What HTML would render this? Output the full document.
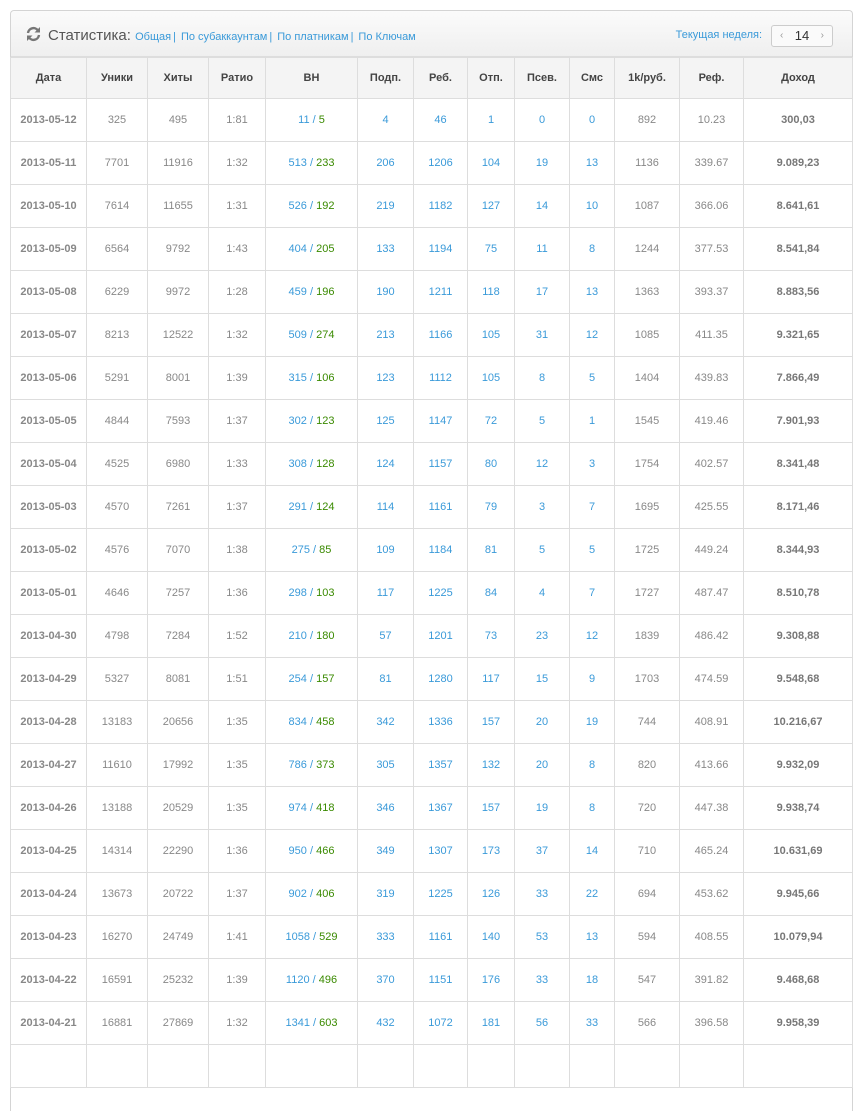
<!DOCTYPE html>
<html><head><meta charset="utf-8"><style>
body{margin:0;background:#fff;font-family:"Liberation Sans",Arial,sans-serif;width:860px;height:1049px;overflow:hidden}
.panel{position:absolute;left:10px;top:10px;width:841px;border:1px solid #d4d4d4;border-radius:4px 4px 0 0;border-bottom:none;height:1100px}
.hd{height:45px;background:linear-gradient(#fbfbfb,#efefef);border-bottom:1px solid #ddd;position:relative;border-radius:4px 4px 0 0}
.title{position:absolute;left:14px;top:15px;font-size:15px;color:#555}
.title a,.wk{color:#3a9ad9;font-size:11px;text-decoration:none}
.sep{color:#3a9ad9;font-size:11px;margin:0 5px 0 2px}
.wk{position:absolute;right:90px;top:18px}
.pg{position:absolute;right:19px;top:14px;width:60px;height:20px;border:1px solid #ccc;border-radius:3px;background:#fafafa;font-size:13px;color:#333;text-align:center;line-height:20px}
.pg i{font-style:normal;color:#999;font-size:10px;position:absolute;top:0}
table{border-collapse:collapse;table-layout:fixed;width:842px;margin-left:-1px}
th,td{border:1px solid #ddd;text-align:center;font-size:11px;padding:0}
th{background:#f4f4f4;height:40px;color:#444;font-weight:bold}
td{height:42px;color:#888}
td.d{font-weight:bold;color:#888}
td.b{color:#3a9ad9}
td.s{font-weight:bold;color:#777}
.g{color:#3a8a00}
</style></head><body>
<div class="panel">
<div class="hd"><div class="title"><svg width="17" height="16" viewBox="0 0 16 16" style="vertical-align:-2px;margin-right:6px"><path d="M2.5 7A5.5 5.5 0 0 1 12.5 4.5" stroke="#777" stroke-width="2.4" fill="none"/><path d="M14.5 1v5.5H9z" fill="#777"/><path d="M13.5 9A5.5 5.5 0 0 1 3.5 11.5" stroke="#777" stroke-width="2.4" fill="none"/><path d="M1.5 15V9.5H7z" fill="#777"/></svg>Статистика: <a>Общая</a><span class="sep">|</span><a>По субаккаунтам</a><span class="sep">|</span><a>По платникам</a><span class="sep">|</span><a>По Ключам</a></div>
<span class="wk">Текущая неделя:</span><div class="pg"><i style="left:8px">‹</i>14<i style="right:8px">›</i></div></div>
<table>
<colgroup><col style="width:76px"><col style="width:61px"><col style="width:61px"><col style="width:57px"><col style="width:92px"><col style="width:56px"><col style="width:54px"><col style="width:47px"><col style="width:55px"><col style="width:45px"><col style="width:65px"><col style="width:64px"><col style="width:109px"></colgroup>
<tr><th>Дата</th><th>Уники</th><th>Хиты</th><th>Ратио</th><th>ВН</th><th>Подп.</th><th>Реб.</th><th>Отп.</th><th>Псев.</th><th>Смс</th><th>1k/руб.</th><th>Реф.</th><th>Доход</th></tr>
<tr><td class="d">2013-05-12</td><td>325</td><td>495</td><td>1:81</td><td class="b">11 / <span class="g">5</span></td><td class="b">4</td><td class="b">46</td><td class="b">1</td><td class="b">0</td><td class="b">0</td><td>892</td><td>10.23</td><td class="s">300,03</td></tr>
<tr><td class="d">2013-05-11</td><td>7701</td><td>11916</td><td>1:32</td><td class="b">513 / <span class="g">233</span></td><td class="b">206</td><td class="b">1206</td><td class="b">104</td><td class="b">19</td><td class="b">13</td><td>1136</td><td>339.67</td><td class="s">9.089,23</td></tr>
<tr><td class="d">2013-05-10</td><td>7614</td><td>11655</td><td>1:31</td><td class="b">526 / <span class="g">192</span></td><td class="b">219</td><td class="b">1182</td><td class="b">127</td><td class="b">14</td><td class="b">10</td><td>1087</td><td>366.06</td><td class="s">8.641,61</td></tr>
<tr><td class="d">2013-05-09</td><td>6564</td><td>9792</td><td>1:43</td><td class="b">404 / <span class="g">205</span></td><td class="b">133</td><td class="b">1194</td><td class="b">75</td><td class="b">11</td><td class="b">8</td><td>1244</td><td>377.53</td><td class="s">8.541,84</td></tr>
<tr><td class="d">2013-05-08</td><td>6229</td><td>9972</td><td>1:28</td><td class="b">459 / <span class="g">196</span></td><td class="b">190</td><td class="b">1211</td><td class="b">118</td><td class="b">17</td><td class="b">13</td><td>1363</td><td>393.37</td><td class="s">8.883,56</td></tr>
<tr><td class="d">2013-05-07</td><td>8213</td><td>12522</td><td>1:32</td><td class="b">509 / <span class="g">274</span></td><td class="b">213</td><td class="b">1166</td><td class="b">105</td><td class="b">31</td><td class="b">12</td><td>1085</td><td>411.35</td><td class="s">9.321,65</td></tr>
<tr><td class="d">2013-05-06</td><td>5291</td><td>8001</td><td>1:39</td><td class="b">315 / <span class="g">106</span></td><td class="b">123</td><td class="b">1112</td><td class="b">105</td><td class="b">8</td><td class="b">5</td><td>1404</td><td>439.83</td><td class="s">7.866,49</td></tr>
<tr><td class="d">2013-05-05</td><td>4844</td><td>7593</td><td>1:37</td><td class="b">302 / <span class="g">123</span></td><td class="b">125</td><td class="b">1147</td><td class="b">72</td><td class="b">5</td><td class="b">1</td><td>1545</td><td>419.46</td><td class="s">7.901,93</td></tr>
<tr><td class="d">2013-05-04</td><td>4525</td><td>6980</td><td>1:33</td><td class="b">308 / <span class="g">128</span></td><td class="b">124</td><td class="b">1157</td><td class="b">80</td><td class="b">12</td><td class="b">3</td><td>1754</td><td>402.57</td><td class="s">8.341,48</td></tr>
<tr><td class="d">2013-05-03</td><td>4570</td><td>7261</td><td>1:37</td><td class="b">291 / <span class="g">124</span></td><td class="b">114</td><td class="b">1161</td><td class="b">79</td><td class="b">3</td><td class="b">7</td><td>1695</td><td>425.55</td><td class="s">8.171,46</td></tr>
<tr><td class="d">2013-05-02</td><td>4576</td><td>7070</td><td>1:38</td><td class="b">275 / <span class="g">85</span></td><td class="b">109</td><td class="b">1184</td><td class="b">81</td><td class="b">5</td><td class="b">5</td><td>1725</td><td>449.24</td><td class="s">8.344,93</td></tr>
<tr><td class="d">2013-05-01</td><td>4646</td><td>7257</td><td>1:36</td><td class="b">298 / <span class="g">103</span></td><td class="b">117</td><td class="b">1225</td><td class="b">84</td><td class="b">4</td><td class="b">7</td><td>1727</td><td>487.47</td><td class="s">8.510,78</td></tr>
<tr><td class="d">2013-04-30</td><td>4798</td><td>7284</td><td>1:52</td><td class="b">210 / <span class="g">180</span></td><td class="b">57</td><td class="b">1201</td><td class="b">73</td><td class="b">23</td><td class="b">12</td><td>1839</td><td>486.42</td><td class="s">9.308,88</td></tr>
<tr><td class="d">2013-04-29</td><td>5327</td><td>8081</td><td>1:51</td><td class="b">254 / <span class="g">157</span></td><td class="b">81</td><td class="b">1280</td><td class="b">117</td><td class="b">15</td><td class="b">9</td><td>1703</td><td>474.59</td><td class="s">9.548,68</td></tr>
<tr><td class="d">2013-04-28</td><td>13183</td><td>20656</td><td>1:35</td><td class="b">834 / <span class="g">458</span></td><td class="b">342</td><td class="b">1336</td><td class="b">157</td><td class="b">20</td><td class="b">19</td><td>744</td><td>408.91</td><td class="s">10.216,67</td></tr>
<tr><td class="d">2013-04-27</td><td>11610</td><td>17992</td><td>1:35</td><td class="b">786 / <span class="g">373</span></td><td class="b">305</td><td class="b">1357</td><td class="b">132</td><td class="b">20</td><td class="b">8</td><td>820</td><td>413.66</td><td class="s">9.932,09</td></tr>
<tr><td class="d">2013-04-26</td><td>13188</td><td>20529</td><td>1:35</td><td class="b">974 / <span class="g">418</span></td><td class="b">346</td><td class="b">1367</td><td class="b">157</td><td class="b">19</td><td class="b">8</td><td>720</td><td>447.38</td><td class="s">9.938,74</td></tr>
<tr><td class="d">2013-04-25</td><td>14314</td><td>22290</td><td>1:36</td><td class="b">950 / <span class="g">466</span></td><td class="b">349</td><td class="b">1307</td><td class="b">173</td><td class="b">37</td><td class="b">14</td><td>710</td><td>465.24</td><td class="s">10.631,69</td></tr>
<tr><td class="d">2013-04-24</td><td>13673</td><td>20722</td><td>1:37</td><td class="b">902 / <span class="g">406</span></td><td class="b">319</td><td class="b">1225</td><td class="b">126</td><td class="b">33</td><td class="b">22</td><td>694</td><td>453.62</td><td class="s">9.945,66</td></tr>
<tr><td class="d">2013-04-23</td><td>16270</td><td>24749</td><td>1:41</td><td class="b">1058 / <span class="g">529</span></td><td class="b">333</td><td class="b">1161</td><td class="b">140</td><td class="b">53</td><td class="b">13</td><td>594</td><td>408.55</td><td class="s">10.079,94</td></tr>
<tr><td class="d">2013-04-22</td><td>16591</td><td>25232</td><td>1:39</td><td class="b">1120 / <span class="g">496</span></td><td class="b">370</td><td class="b">1151</td><td class="b">176</td><td class="b">33</td><td class="b">18</td><td>547</td><td>391.82</td><td class="s">9.468,68</td></tr>
<tr><td class="d">2013-04-21</td><td>16881</td><td>27869</td><td>1:32</td><td class="b">1341 / <span class="g">603</span></td><td class="b">432</td><td class="b">1072</td><td class="b">181</td><td class="b">56</td><td class="b">33</td><td>566</td><td>396.58</td><td class="s">9.958,39</td></tr>
<tr><td class="d">&nbsp;</td><td></td><td></td><td></td><td></td><td></td><td></td><td></td><td></td><td></td><td></td><td></td><td></td></tr>
</table>
</div>
</body></html>
